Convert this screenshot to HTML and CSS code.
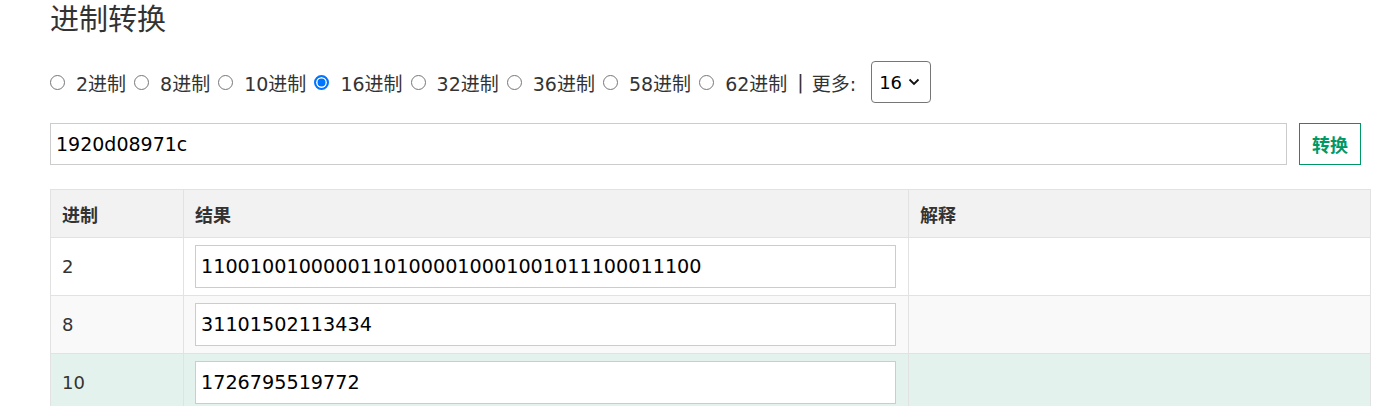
FILE: index.html
```html
<!DOCTYPE html>
<html lang="zh">
<head>
<meta charset="utf-8">
<title>进制转换</title>
<link rel="stylesheet" href="styles.css">
</head>
<body>
<div class="page">
  <h1 class="title">进制转换</h1>
  <div class="radios">
    <label class="opt"><input type="radio" name="base"><span>2进制</span></label>
    <label class="opt"><input type="radio" name="base"><span>8进制</span></label>
    <label class="opt"><input type="radio" name="base"><span>10进制</span></label>
    <label class="opt"><input type="radio" name="base" checked><span>16进制</span></label>
    <label class="opt"><input type="radio" name="base"><span>32进制</span></label>
    <label class="opt"><input type="radio" name="base"><span>36进制</span></label>
    <label class="opt"><input type="radio" name="base"><span>58进制</span></label>
    <label class="opt"><input type="radio" name="base"><span>62进制</span></label>
    <span class="sep">|</span>
    <span class="more">更多:</span>
    <div class="select"><span>16</span><svg width="12" height="8" viewBox="0 0 12 8"><path d="M1.5 1.5 L6 6 L10.5 1.5" fill="none" stroke="#111" stroke-width="1.8"/></svg></div>
  </div>
  <div class="inputrow">
    <div class="field">1920d08971c</div>
    <button class="btn">转换</button>
  </div>
  <table class="tbl">
    <thead>
      <tr><th class="c1">进制</th><th class="c2">结果</th><th class="c3">解释</th></tr>
    </thead>
    <tbody>
      <tr><td>2</td><td><div class="cellfield">11001001000001101000010001001011100011100</div></td><td></td></tr>
      <tr class="alt"><td>8</td><td><div class="cellfield">31101502113434</div></td><td></td></tr>
      <tr class="hl"><td>10</td><td><div class="cellfield">1726795519772</div></td><td></td></tr>
    </tbody>
  </table>
</div>
</body>
</html>
```
FILE: styles.css
```css
html, body { margin: 0; padding: 0; background: #fff; }
body {
  font-family: "DejaVu Sans", Verdana, "Noto Sans CJK SC", sans-serif;
  color: #333;
  font-size: 19px;
  overflow: hidden;
}
.page { padding: 0 16px 0 50px; }
.title {
  margin: 0;
  font-family: "Noto Sans CJK SC", sans-serif;
  font-weight: normal;
  font-size: 29px;
  line-height: 34px;
  color: #333;
}
.radios {
  margin-top: 27px;
  height: 42px;
  display: flex;
  align-items: center;
  font-size: 19px;
}
.opt { display: flex; align-items: center; margin-right: 8px; }
.opt input {
  appearance: none;
  -webkit-appearance: none;
  box-sizing: border-box;
  margin: 1px 11px 0 0;
  width: 15px; height: 15px;
  border: 1.5px solid #767676;
  border-radius: 50%;
  background: #fff;
}
.opt input:checked {
  border: 2px solid #0075ff;
  background: #0075ff;
  box-shadow: inset 0 0 0 1.5px #fff;
}
.opt span, .more { font-family: "DejaVu Sans", "Noto Sans CJK SC", sans-serif; }
.sep { margin: 0 8px 0 2px; }
.more { margin-right: 15px; }
.select {
  box-sizing: border-box;
  width: 60px; height: 42px;
  border: 1px solid #767676;
  border-radius: 4px;
  display: flex; align-items: center;
  padding-left: 7px; gap: 6px;
  color: #000;
  font-size: 18px;
}
.inputrow { display: flex; margin-top: 20px; gap: 12px; }
.field {
  box-sizing: border-box;
  flex: 1;
  height: 42px;
  border: 1px solid #ccc;
  padding: 0 5px;
  display: flex; align-items: center;
  font-size: 19px;
  color: #000;
}
.btn {
  box-sizing: border-box;
  width: 62px; height: 42px;
  margin-right: 10px;
  background: #fff;
  border: 1px solid #009966;
  color: #009966;
  font-weight: bold;
  font-size: 18px;
  font-family: "Noto Sans CJK SC", sans-serif;
  padding: 0;
}
.tbl {
  margin-top: 24px;
  width: 1321px;
  border-collapse: collapse;
}
.tbl th, .tbl td { border: 1px solid #e2e2e2; text-align: left; padding: 0 11px; }
.tbl th {
  background: #f2f2f2; height: 47px;
  font-family: "Noto Sans CJK SC", sans-serif; font-weight: bold; font-size: 18px;
}
.tbl td { height: 57px; font-size: 18px; }
.c1 { width: 110px; }
.c2 { width: 702px; }
.alt td { background: #f9f9f9; }
.hl td { background: #e4f2ee; }
.cellfield {
  box-sizing: border-box;
  height: 43px; width: 701px;
  border: 1px solid #ccc; background: #fff;
  padding: 0 5px;
  display: flex; align-items: center;
  font-size: 19.2px; color: #000;
}
```
